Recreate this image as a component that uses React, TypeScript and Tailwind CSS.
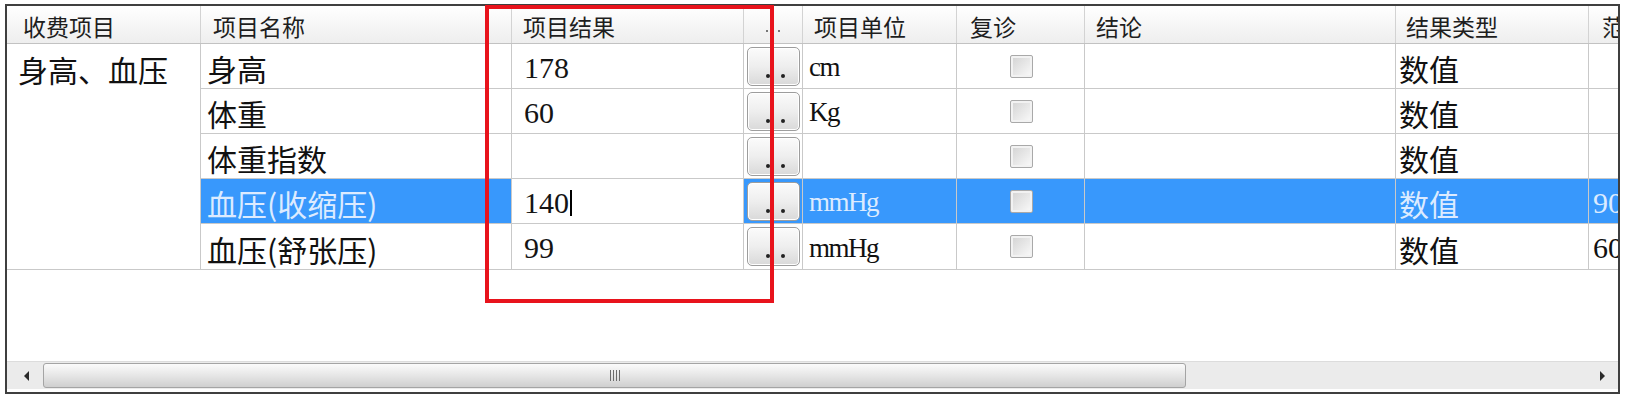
const cjk = "font-['Noto_Sans_CJK_SC',sans-serif]";
const serif = "font-['Liberation_Serif','Noto_Sans_CJK_SC',serif]";

type Row = {
  name: string;
  value: string;
  unit: string;
  type: string;
  range: string;
  selected?: boolean;
};

const rows: Row[] = [
  { name: '身高', value: '178', unit: 'cm', type: '数值', range: '' },
  { name: '体重', value: '60', unit: 'Kg', type: '数值', range: '' },
  { name: '体重指数', value: '', unit: '', type: '数值', range: '' },
  { name: '血压(收缩压)', value: '140', unit: 'mmHg', type: '数值', range: '90', selected: true },
  { name: '血压(舒张压)', value: '99', unit: 'mmHg', type: '数值', range: '60' },
];

function HeaderCell({ label, className }: { label: string; className: string }) {
  return (
    <div className={`flex h-full shrink-0 items-center border-r border-[#d3d3d3] pt-[3px] text-[23px] text-[#1e1e1e] ${cjk} ${className}`}>
      <span className="whitespace-nowrap leading-none">{label}</span>
    </div>
  );
}

function MoreButton() {
  return (
    <div className="flex h-[39px] w-[53px] items-end justify-center gap-[11px] rounded-[5px] border border-[#9d9d9d] bg-linear-to-b from-[#fbfbfb] via-[#eeeeee] to-[#d9d9d9] pb-[7px] pl-[3px] shadow-[inset_0_0_0_1px_#ffffff]">
      <span className="h-[4px] w-[4px] rounded-full bg-[#222]" />
      <span className="h-[4px] w-[4px] rounded-full bg-[#222]" />
    </div>
  );
}

function Checkbox() {
  return (
    <div className="h-[23px] w-[23px] rounded-[2px] border border-[#a9a9a9] bg-linear-to-br from-[#d2d2d2] to-[#fbfbfb] shadow-[inset_0_0_0_2px_#f2f2f2]" />
  );
}

function DataRow({ row }: { row: Row }) {
  const sel = row.selected;
  const bg = sel ? 'bg-[#3898fc]' : 'bg-white';
  const fg = sel ? 'text-[#dcebff]' : 'text-[#111111]';
  return (
    <div className={`flex h-[45px] border-b border-[#c9c9c9] ${fg}`}>
      <div className={`flex w-[311px] shrink-0 items-center border-r border-[#c9c9c9] pl-[6px] pt-[4px] text-[30px] leading-none whitespace-nowrap ${cjk} ${bg}`}>
        {row.name}
      </div>
      <div className={`flex w-[232px] shrink-0 items-center border-r border-[#c9c9c9] bg-white pl-[12px] pt-[3px] text-[30px] leading-none text-[#141414] ${serif}`}>
        {row.value}
        {sel && <span className="ml-[1px] h-[26px] w-[2px] bg-black" />}
      </div>
      <div className={`flex w-[59px] shrink-0 items-start border-r border-[#c9c9c9] pl-[3px] pt-[3px] ${bg}`}>
        <MoreButton />
      </div>
      <div className={`flex w-[154px] shrink-0 items-center border-r border-[#c9c9c9] pl-[6px] pt-[3px] text-[27px] leading-none tracking-[-1.5px] ${serif} ${bg}`}>
        {row.unit}
      </div>
      <div className={`flex w-[128px] shrink-0 items-center justify-center border-r border-[#c9c9c9] pl-[2px] ${bg}`}>
        <Checkbox />
      </div>
      <div className={`w-[311px] shrink-0 border-r border-[#c9c9c9] ${bg}`} />
      <div className={`flex w-[193px] shrink-0 items-center border-r border-[#c9c9c9] pl-[3px] pt-[4px] text-[30px] leading-none ${cjk} ${bg}`}>
        {row.type}
      </div>
      <div className={`flex w-[120px] shrink-0 items-center pl-[4px] pt-[3px] text-[30px] leading-none ${serif} ${bg}`}>
        {row.range}
      </div>
    </div>
  );
}

function Arrow({ dir }: { dir: 'left' | 'right' }) {
  return dir === 'left' ? (
    <span className="h-0 w-0 border-y-[5px] border-r-[5px] border-y-transparent border-r-[#2a2a2a]" />
  ) : (
    <span className="h-0 w-0 border-y-[5px] border-l-[5px] border-y-transparent border-l-[#2a2a2a]" />
  );
}

function ScrollBar() {
  return (
    <div className="mb-[3px] flex h-[28px] shrink-0 items-stretch border-t border-[#dcdcdc] bg-[#ebebeb]">
      <div className="flex w-[36px] shrink-0 items-center justify-center pl-[2px]">
        <Arrow dir="left" />
      </div>
      <div className="my-[1px] flex w-[1143px] shrink-0 items-center justify-center rounded-[3px] border border-[#a4a4a4] bg-linear-to-b from-[#fbfbfb] via-[#e6e6e6] to-[#cfcfcf]">
        <div className="flex h-[11px] gap-[2px]">
          <span className="w-[1px] bg-[#6d6d6d]" />
          <span className="w-[1px] bg-[#6d6d6d]" />
          <span className="w-[1px] bg-[#6d6d6d]" />
          <span className="w-[1px] bg-[#6d6d6d]" />
        </div>
      </div>
      <div className="flex-1" />
      <div className="flex w-[30px] shrink-0 items-center justify-center pr-[2px]">
        <Arrow dir="right" />
      </div>
    </div>
  );
}

export default function App() {
  return (
    <div className="relative h-[400px] w-[1631px] overflow-hidden bg-white">
      <div className="ml-[5px] mt-[4px] flex h-[390px] w-[1615px] flex-col overflow-hidden border-2 border-[#3f3f3f] bg-white">
        <div className="flex h-[38px] shrink-0 border-b border-[#c2c2c2] bg-linear-to-b from-white to-[#eeeeee]">
          <HeaderCell label="收费项目" className="w-[194px] pl-[16px]" />
          <HeaderCell label="项目名称" className="w-[311px] pl-[12px]" />
          <HeaderCell label="项目结果" className="w-[232px] pl-[11px]" />
          <div className="flex h-full w-[59px] shrink-0 items-end justify-center gap-[10px] border-r border-[#d3d3d3] pb-[11px]">
            <span className="h-[2px] w-[2px] bg-[#777]" />
            <span className="h-[2px] w-[2px] bg-[#777]" />
          </div>
          <HeaderCell label="项目单位" className="w-[154px] pl-[11px]" />
          <HeaderCell label="复诊" className="w-[128px] pl-[13px]" />
          <HeaderCell label="结论" className="w-[311px] pl-[11px]" />
          <HeaderCell label="结果类型" className="w-[193px] pl-[10px]" />
          <HeaderCell label="范围" className="w-[120px] pl-[13px]" />
        </div>

        <div className="flex shrink-0 border-b border-[#c9c9c9]">
          <div className={`w-[194px] shrink-0 border-r border-[#c9c9c9] text-[30px] text-[#111111] ${cjk}`}>
            <div className="flex h-[45px] items-center pl-[11px] pt-[4px] leading-none whitespace-nowrap">身高、血压</div>
          </div>
          <div className="flex flex-1 flex-col overflow-hidden [&>*:last-child]:border-b-0">
            {rows.map((r) => (
              <DataRow key={r.name} row={r} />
            ))}
          </div>
        </div>

        <div className="flex-1" />
        <ScrollBar />
      </div>

      <div className="absolute left-[485px] top-[5px] h-[298px] w-[289px] border-4 border-[#e8131c]" />
    </div>
  );
}
